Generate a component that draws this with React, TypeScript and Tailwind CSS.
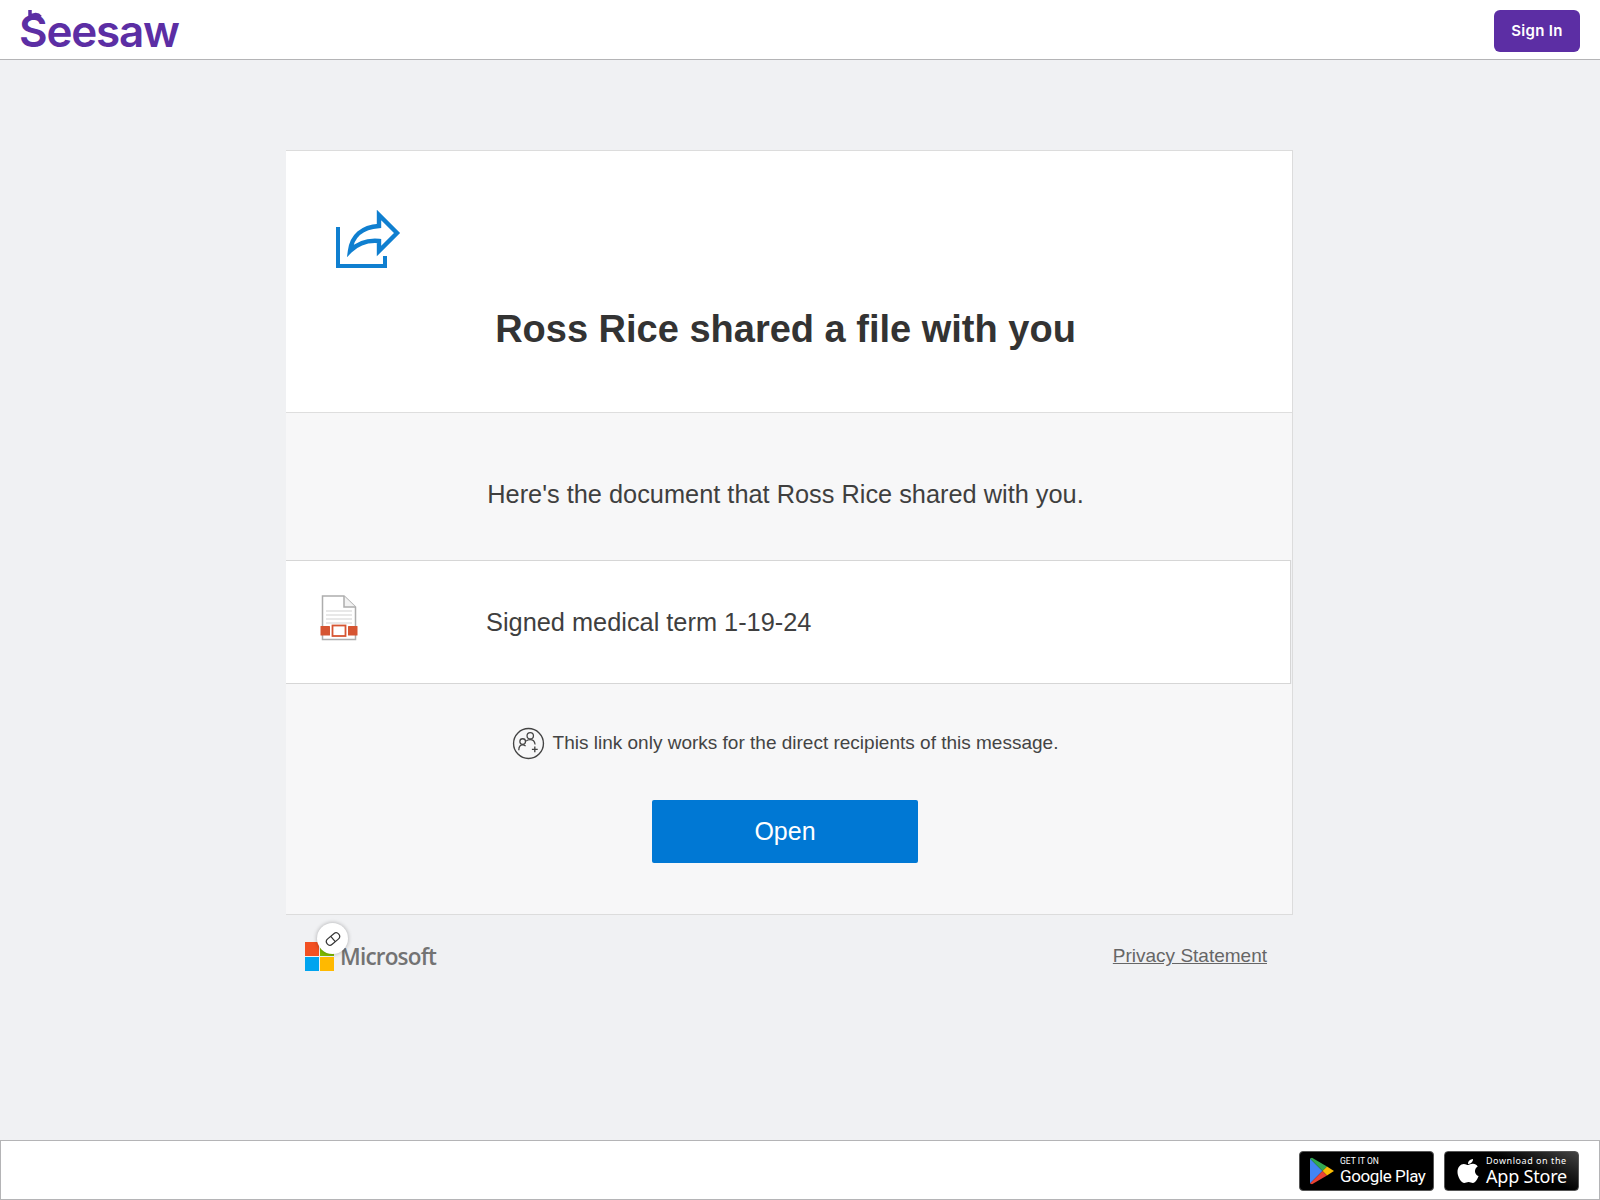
import React from "react";

const arial = "font-['Liberation_Sans',Arial,sans-serif]";

function ShareIcon() {
  return (
    <svg width="66" height="60" viewBox="0 0 66 60" fill="none" className="block">
      <path d="M2 17V56H49V46" stroke="#0f7fd0" strokeWidth="4" fill="none" />
      <path d="M14 41C16 26 26 17 43 16V5L61 23L43 41V31C32 30 22 33 14 41Z" stroke="#0f7fd0" strokeWidth="4.400" strokeLinejoin="miter" fill="none" />
    </svg>
  );
}

function DocIcon() {
  return (
    <svg width="38" height="46" viewBox="0 0 38 46" fill="none" className="block">
      <path d="M2.500 1H24L35.500 12V44.500H2.500Z" fill="#fff" stroke="#adadad" strokeWidth="1.500" />
      <path d="M24 1V12H35.500" fill="#f2f2f2" stroke="#adadad" strokeWidth="1.500" />
      <path d="M6 16H32M6 20H32M6 24H32M6 28H32" stroke="#d2d2d2" strokeWidth="1.200" />
      <rect x="0.500" y="31" width="9.500" height="9.500" rx="0.500" fill="#d65532" />
      <rect x="28" y="31" width="9.500" height="9.500" rx="0.500" fill="#d65532" />
      <rect x="12.500" y="30.500" width="13" height="10.500" fill="#fff" stroke="#d65532" strokeWidth="1.800" />
    </svg>
  );
}

function PeopleIcon() {
  return (
    <svg width="33" height="33" viewBox="0 0 34 34" fill="none" className="block">
      <circle cx="17" cy="17" r="15.400" stroke="#444" strokeWidth="1.400" />
      <circle cx="18.800" cy="9" r="3.300" stroke="#444" strokeWidth="1.300" />
      <circle cx="11" cy="15" r="2.900" stroke="#444" strokeWidth="1.300" />
      <path d="M7 24c0-3.500 1.600-5.500 4-5.500 1.200 0 2.200.4 3 1.200M14.500 14.500c1-1 2.600-1.500 4.300-1.500 3 0 4.600 2 5 5" stroke="#444" strokeWidth="1.300" />
      <path d="M23.500 20v6M20.500 23h6" stroke="#444" strokeWidth="1.400" />
    </svg>
  );
}

function LinkBadge() {
  return (
    <div className="absolute left-[12px] top-[-19px] flex h-[31px] w-[31px] items-center justify-center rounded-full bg-white shadow-[0_0_4px_rgba(0,0,0,0.3)]">
      <svg width="18" height="18" viewBox="0 0 18 18" fill="none">
        <g transform="rotate(-40 9 9)">
          <rect x="1.500" y="5.500" width="15" height="7" rx="3.500" stroke="#333" strokeWidth="1.200" />
          <path d="M9 5.500V12.500" stroke="#333" strokeWidth="1.200" />
        </g>
      </svg>
    </div>
  );
}

function MsLogo() {
  return (
    <div className="grid h-[29px] w-[29px] grid-cols-2 gap-px">
      <div className="bg-[#f25022]" />
      <div className="bg-[#7fba00]" />
      <div className="bg-[#00a4ef]" />
      <div className="bg-[#ffb900]" />
    </div>
  );
}

function PlayBadge() {
  return (
    <div className="flex h-[40px] w-[135px] items-center rounded-[4px] border border-[#555] bg-black pl-[9px] text-white">
      <svg width="26" height="28" viewBox="0 0 26 28">
        <path d="M1 1.500V26.500L13.500 14Z" fill="#4285f4" />
        <path d="M1 1.500L13.500 14L18 9.500L3 .8Z" fill="#34a853" />
        <path d="M18 9.500L13.500 14L18 18.500L25 14Z" fill="#fbbc04" />
        <path d="M1 26.500L13.500 14L18 18.500L3 27.200Z" fill="#ea4335" />
      </svg>
      <div className="ml-[5px] flex flex-col font-['Roboto',sans-serif] leading-none">
        <span className="text-[8.500px] leading-[10px]">GET IT ON</span>
        <span className="text-[17px] leading-[20px] tracking-[-0.4px]">Google Play</span>
      </div>
    </div>
  );
}

function AppleBadge() {
  return (
    <div className="flex h-[40px] w-[135px] items-center rounded-[4px] border border-[#555] bg-[linear-gradient(205deg,#444_0%,#222_20%,#000_42%)] pl-[12px] text-white">
      <svg width="22" height="26" viewBox="0 0 22 26" fill="#fff">
        <path d="M16 1c.2 2.200-1.900 5-5 4.900C10.800 3.400 13.200 1.200 16 1Z" />
        <path d="M11 7c1.200 0 2.900-1.300 5-1.200 1.900.1 3.700 1 4.700 2.600-4 2.500-3.400 8 .9 9.700-1 2.700-3.300 7-5.700 7-1.500 0-2.500-1-4.300-1s-2.900 1-4.300 1C4.500 25.100.5 18.900.5 14c0-5 3.200-8.100 6.300-8.100 1.700 0 3.200 1.100 4.200 1.100Z" />
      </svg>
      <div className="ml-[7px] flex flex-col font-['Noto_Sans',sans-serif] leading-none">
        <span className="text-[9px] leading-[11px] tracking-[0.55px]">Download on the</span>
        <span className="text-[18px] leading-[21px] tracking-[-0.2px]">App Store</span>
      </div>
    </div>
  );
}

export default function App() {
  return (
    <div className="flex min-h-[1200px] flex-col bg-[#f0f1f3]">
      <header className="flex h-[60px] items-center justify-between border-b border-[#b4b4b6] bg-white pl-[19px] pr-[20px] pt-[2px]">
        <div className="relative flex h-full items-center">
          <span className="font-['Inter',sans-serif] text-[44px] font-semibold leading-none tracking-[-1.200px] text-[#5c2ea4]">
            Seesaw
          </span>
          <svg width="18" height="12" viewBox="0 0 18 12" className="absolute left-[6px] top-[8px]" fill="none">
            <path d="M5 0V7C9 3.500 13 4 15.500 7" stroke="#5c2ea4" strokeWidth="3.500" />
          </svg>
        </div>
        <button className="h-[42px] w-[86px] rounded-[6px] bg-[#5c2ea4] pt-[2px] font-['Inter',sans-serif] text-[15px] font-semibold tracking-[0.3px] text-white">
          Sign In
        </button>
      </header>

      <main className="flex-1 pl-[286px] pt-[90px]">
        <div className={`w-[1007px] border-y border-r border-[#dcdcdc] ${arial}`}>
          <section className="h-[262px] border-b border-[#dedede] bg-white pl-[50px] pt-[59px]">
            <ShareIcon />
            <h1 className="mt-[37px] w-[899px] text-center text-[38px] font-bold leading-[44px] text-[#333]">
              Ross Rice shared a file with you
            </h1>
          </section>
          <section className="flex h-[147px] items-center justify-center bg-[#f7f7f8] pr-[7px] pt-[15px] text-[25.350px] text-[#3f3f3f]">
            Here&apos;s the document that Ross Rice shared with you.
          </section>
          <section className="mr-px flex h-[124px] items-center border-y border-r border-[#d6d6d6] bg-white pl-[34px] text-[25.350px] text-[#3f3f3f]">
            <div className="mb-[8px]">
              <DocIcon />
            </div>
            <span className="ml-[128px]">Signed medical term 1-19-24</span>
          </section>
          <section className="flex h-[230px] flex-col items-center bg-[#f7f7f8] pr-[8px] pt-[43px]">
            <div className="flex items-center gap-[8px] text-[19px] text-[#444]">
              <PeopleIcon />
              <span>This link only works for the direct recipients of this message.</span>
            </div>
            <button className="mt-[40px] h-[63px] w-[266px] rounded-[2px] bg-[#0078d4] text-[25px] text-white">
              Open
            </button>
          </section>
        </div>
        <div className={`flex w-[1007px] items-center justify-between pl-[19px] pr-[26px] pt-[27px] ${arial}`}>
          <div className="relative flex items-center">
            <LinkBadge />
            <MsLogo />
            <span className="ml-[6px] font-['Open_Sans',sans-serif] text-[22.500px] font-semibold leading-[29px] tracking-[-0.8px] text-[#737373]">
              Microsoft
            </span>
          </div>
          <a className="text-[19px] text-[#666] underline">Privacy Statement</a>
        </div>
      </main>

      <footer className="flex h-[60px] items-center justify-end gap-[10px] border border-[#b4b4b6] bg-white pr-[20px] pt-[2px]">
        <PlayBadge />
        <AppleBadge />
      </footer>
    </div>
  );
}
